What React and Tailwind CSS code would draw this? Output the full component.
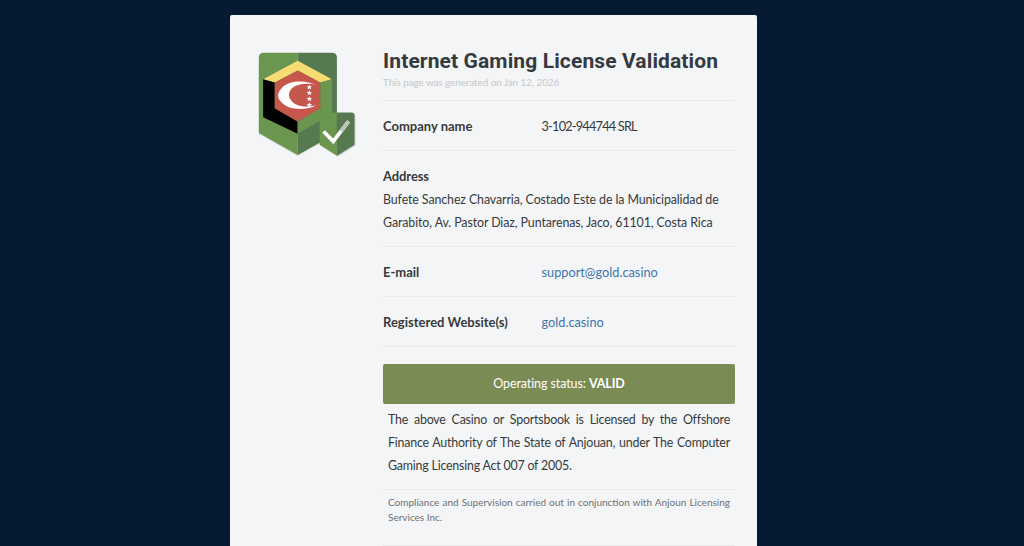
import React from "react";

const Star = ({ y }) => (
  <path
    d={`M207 ${y - 8}L209.4 ${y - 2.6}L215.5 ${y - 2.6}L210.7 ${y + 1.2}L212.4 ${y + 7}L207 ${y + 3.6}L201.6 ${y + 7}L203.3 ${y + 1.2}L198.5 ${y - 2.6}L204.6 ${y - 2.6}Z`}
    fill="#ffffff"
  />
);

const LicenseLogo = () => (
  <svg viewBox="50 60 300 325" className="w-[100px] h-[108px] shrink-0">
    {/* shield body */}
    <path d="M172 71H70Q55 71 55 86V313L172 379L290 313V86Q290 71 275 71Z" fill="#000000" opacity="0.12" />
    <path d="M172 68H70Q55 68 55 83V310L172 376V68Z" fill="#6a9650" />
    <path d="M172 68H275Q290 68 290 83V310L172 376V68Z" fill="#56794f" />
    {/* cube */}
    <path d="M172 92L275 148L240 158L172 122L103 158L68 148Z" fill="#f7dc74" />
    <path d="M68 148L103 158V235L172 275V312L68 262Z" fill="#000000" />
    <path d="M275 148V252L172 312V275L240 235V158Z" fill="#6a9650" />
    <path d="M172 122L240 158V235L172 275L103 235V158Z" fill="#c5574c" />
    {/* crescent + stars */}
    <path
      d="M228 166C200 150 150 150 128 170C108 190 108 205 128 222C150 242 200 242 228 226C195 235 160 230 148 205C142 190 150 175 165 168C185 160 210 160 228 166Z"
      fill="#ffffff"
    />
    <Star y={172} />
    <Star y={189} />
    <Star y={207} />
    <Star y={225} />
    {/* check badge */}
    <path d="M241 254Q241 251 251 251H336Q346 251 346 261V348L293 381L241 348Z" fill="#000000" opacity="0.15" />
    <path d="M290 248H248Q238 248 238 258V345L290 378Z" fill="#6a9650" />
    <path d="M290 248H333Q343 248 343 258V345L290 378Z" fill="#56794f" />
    <path d="M250 305L279 335L325 275" fill="none" stroke="#ffffff" strokeWidth="11" />
    <path d="M303 305L325 275" fill="none" stroke="#b9c4b4" strokeWidth="11" />
  </svg>
);

const Divider = () => <div className="h-px bg-[#e9eaec]" />;

const InfoRow = ({ label, children }) => (
  <>
    <div className="flex items-center h-[49px] pt-[2px] text-[13px]">
      <span className="w-[158.5px] font-bold">{label}</span>
      <span className="text-[12.75px]">{children}</span>
    </div>
    <Divider />
  </>
);

const FullLine = ({ children }) => (
  <div className="text-justify [text-align-last:justify]">{children}</div>
);

export default function App() {
  return (
    <div className="h-[546px] overflow-hidden bg-[#061a32] font-['Lato',sans-serif] text-[#373a3c]">
      <div className="mt-[15px] ml-[230px] w-[527px] h-[600px] rounded-[2px] bg-[#f4f5f7] flex pl-[27px] pr-[22px] pt-[35px]">
        <LicenseLogo />
        <div className="ml-[26px] flex-1">
          <h1 className="text-[21px] leading-[24px] mt-[-1px] tracking-[0.12px] font-['Roboto',sans-serif] font-bold text-[#343a40] whitespace-nowrap">
            Internet Gaming License Validation
          </h1>
          <p className="text-[9.75px] leading-[12px] mt-[3px] mb-[12px] text-[#c4c7ca]">
            This page was generated on Jan 12, 2026
          </p>
          <Divider />
          <InfoRow label="Company name">
            <span className="tracking-[-0.8px]">3-102-944744 SRL</span>
          </InfoRow>
          <div className="h-[95px] pt-[14px] text-[12.4px] leading-[23px] tracking-[-0.1px]">
            <div className="font-bold text-[13px]">Address</div>
            <div>
              Bufete Sanchez Chavarria, Costado Este de la Municipalidad de
              <br />
              Garabito, Av. Pastor Diaz, Puntarenas, Jaco, 61101, Costa Rica
            </div>
          </div>
          <Divider />
          <InfoRow label="E-mail">
            <a className="text-[#3f74ad]">support@gold.casino</a>
          </InfoRow>
          <InfoRow label="Registered Website(s)">
            <a className="text-[#3f74ad]">gold.casino</a>
          </InfoRow>
          <div className="mt-[17px] h-[40px] pt-[1px] rounded-[2px] bg-[#7a8c54] flex items-center justify-center text-[12.5px] tracking-[-0.1px] text-white">
            <span>
              Operating status: <b>VALID</b>
            </span>
          </div>
          <div className="px-[5px] pt-[4px] text-[12.4px] leading-[23px] tracking-[-0.2px] h-[85px]">
            <FullLine>The above Casino or Sportsbook is Licensed by the Offshore</FullLine>
            <FullLine>Finance Authority of The State of Anjouan, under The Computer</FullLine>
            <div>Gaming Licensing Act 007 of 2005.</div>
          </div>
          <Divider />
          <div className="px-[5px] pt-[5px] text-[10px] leading-[15px] text-[#6c7075] h-[55px]">
            <FullLine>Compliance and Supervision carried out in conjunction with Anjoun Licensing</FullLine>
            <div>Services Inc.</div>
          </div>
          <Divider />
        </div>
      </div>
    </div>
  );
}
